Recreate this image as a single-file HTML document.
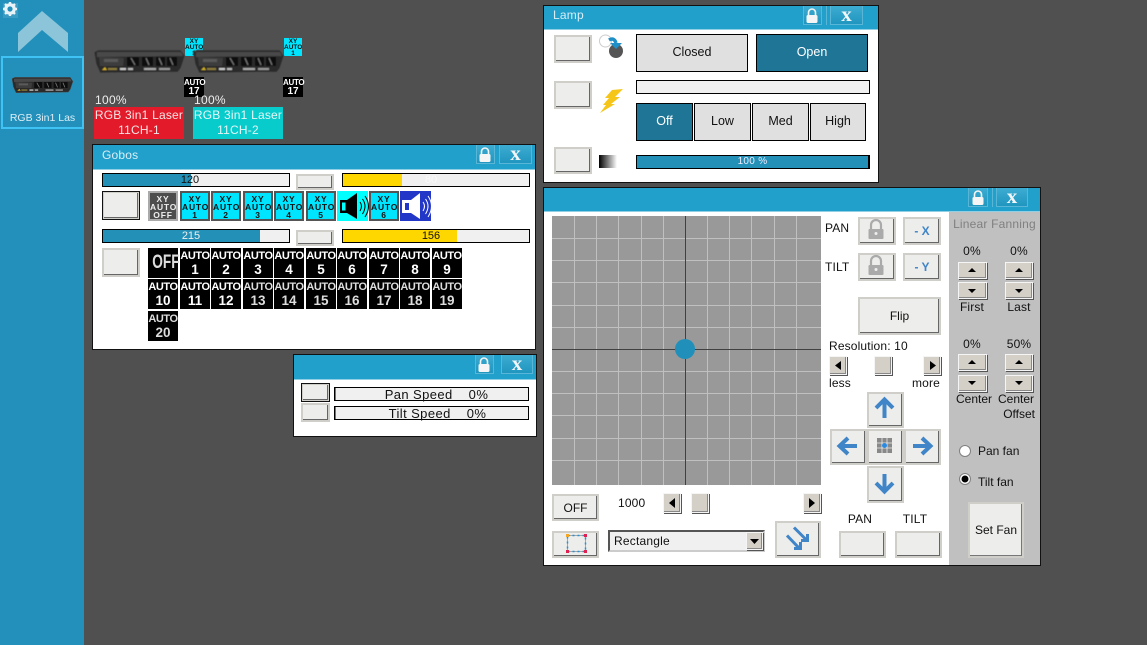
<!DOCTYPE html>
<html><head><meta charset="utf-8"><style>
html,body{margin:0;padding:0;width:1147px;height:645px;overflow:hidden;background:#505050}
div{position:absolute;box-sizing:border-box;white-space:nowrap}
body,div{font-family:"Liberation Sans",sans-serif;font-size:12px;color:#111}
.win{background:#fff;border:1px solid #111}
.tb{background:#22a0cc;border-bottom:1px solid #8fd0e6;color:#d8eef5;padding-left:9px;line-height:20px;font-size:12px;letter-spacing:.2px}
.lk,.cl{background:linear-gradient(#3dacd2,#2096c0);border:1px solid #5ab6d6;height:19px;border-top:0}
.cl{color:#f2f6f8;font:bold 21px/16px "Liberation Serif",serif;text-align:center}
.b{background:#ededeb;border:2px solid #d0cec8;box-shadow:inset -1px -1px 0 #666;text-align:center}
.f{border:1px solid #000;background:#f0f0f0}
.f2{background:#2390b8;height:12px;left:0;top:0}
.c{text-align:center}
.x{background:#00e5ff;border:2px solid #555;width:30px;height:30px;top:191px;font:bold 8.5px/8px "Liberation Sans",sans-serif;letter-spacing:.8px;text-align:center;color:#111;padding-top:2px;white-space:normal}
.g{background:#000;color:#fff;width:30px;height:30px;font:bold 11px/13px "Liberation Sans",sans-serif;letter-spacing:-.4px;text-align:center;padding-top:2px}
.g b{display:block;font-size:13.5px;line-height:14px;letter-spacing:0}
.ar{background:#e0e0e0;border:1px solid #000;font-size:12.5px;line-height:35px;text-align:center;color:#111}
.ac{background:#1f7596;color:#fff}
.sb{background:#d4d0c8;border:1px solid #f5f5f5;box-shadow:1px 1px 0 #555,inset -1px -1px 0 #888}
.t{letter-spacing:.15px}
</style></head><body>
<!-- sidebar -->
<div style="left:0;top:0;width:84px;height:645px;background:#2390bb"></div>
<div style="left:3px;top:3px;width:15px;height:15px;background:#3a9bc3"></div>
<div style="left:1px;top:56px;width:83px;height:73px;border:2px solid #3fc3f5"></div>
<div class="c" style="left:1px;top:112px;width:83px;color:#dceef5;font-size:10.5px">RGB 3in1 Las</div>

<!-- fixtures -->
<div style="left:185px;top:38px;width:18px;height:18px;background:#00e5ff;font:bold 6.5px/6px 'Liberation Sans',sans-serif;text-align:center;white-space:normal;padding-top:1px">XY AUTO 1</div>
<div class="g" style="left:184px;top:77px;width:20px;height:20px;font-size:8px;line-height:9px;padding-top:1px;letter-spacing:-.3px">AUTO<b style="font-size:10px;line-height:10px">17</b></div>
<div style="left:284px;top:38px;width:18px;height:18px;background:#00e5ff;font:bold 6.5px/6px 'Liberation Sans',sans-serif;text-align:center;white-space:normal;padding-top:1px">XY AUTO 1</div>
<div class="g" style="left:283px;top:77px;width:20px;height:20px;font-size:8px;line-height:9px;padding-top:1px;letter-spacing:-.3px">AUTO<b style="font-size:10px;line-height:10px">17</b></div>
<div style="left:95px;top:93px;color:#eee;letter-spacing:.3px">100%</div>
<div style="left:194px;top:93px;color:#eee;letter-spacing:.3px">100%</div>
<div class="c" style="left:94px;top:107px;width:90px;height:32px;background:#e21a2a;color:#f4e6e6;line-height:15px;padding-top:1px;letter-spacing:.2px">RGB 3in1 Laser<br>11CH-1</div>
<div class="c" style="left:193px;top:107px;width:90px;height:32px;background:#08cccc;color:#e6f6f6;line-height:15px;padding-top:1px;letter-spacing:.2px">RGB 3in1 Laser<br>11CH-2</div>

<!-- Gobos window -->
<div class="win" style="left:92px;top:144px;width:444px;height:206px"></div>
<div class="tb" style="left:93px;top:145px;width:442px;height:25px">Gobos</div>
<div class="lk" style="left:476px;top:145px;width:19px"></div>
<div class="cl" style="left:499px;top:145px;width:33px">x</div>

<div class="f" style="left:102px;top:173px;width:188px;height:14px"><div class="f2" style="width:88px"></div><div class="c" style="left:0;top:0;width:174px;font-size:11px">120</div></div>
<div class="b" style="left:296px;top:174px;width:38px;height:16px"></div>
<div class="f" style="left:342px;top:173px;width:188px;height:14px"><div class="f2" style="width:59px;background:#ffd700"></div><div class="c" style="left:0;top:0;width:176px;font-size:11px;color:#f8f8f8">80</div></div>
<div class="b" style="left:102px;top:191px;width:38px;height:29px;outline:1px solid #111;outline-offset:-1px"></div>
<div class="x" style="left:148px;background:#4d4d4d;border-color:#aaa;color:#eee">XY AUTO OFF</div>
<div class="x" style="left:180px">XY AUTO 1</div>
<div class="x" style="left:211px">XY AUTO 2</div>
<div class="x" style="left:243px">XY AUTO 3</div>
<div class="x" style="left:274px">XY AUTO 4</div>
<div class="x" style="left:306px">XY AUTO 5</div>
<div style="left:337px;top:191px;width:31px;height:30px;background:#00ffff"></div>
<div class="x" style="left:369px">XY AUTO 6</div>
<div style="left:400px;top:191px;width:31px;height:30px;background:#2236c8"></div>

<div class="f" style="left:102px;top:229px;width:188px;height:14px"><div class="f2" style="width:157px"></div><div class="c" style="left:0;top:0;width:176px;font-size:11px;color:#f0f0f0">215</div></div>
<div class="b" style="left:296px;top:230px;width:38px;height:16px"></div>
<div class="f" style="left:342px;top:229px;width:188px;height:14px"><div class="f2" style="width:114px;background:#ffd700"></div><div class="c" style="left:0;top:0;width:176px;font-size:11px">156</div></div>
<div class="b" style="left:102px;top:248px;width:38px;height:29px"></div>

<div class="g" style="left:148px;top:248px;padding:0"><div style="left:0;top:4px;width:30px;font:bold 19px/22px 'Liberation Sans',sans-serif;color:#ddd;letter-spacing:0;transform:scaleX(.72);text-align:center">OFF</div></div>
<div class="g" style="left:180px;top:248px">AUTO<b>1</b></div>
<div class="g" style="left:211px;top:248px">AUTO<b>2</b></div>
<div class="g" style="left:243px;top:248px">AUTO<b>3</b></div>
<div class="g" style="left:274px;top:248px">AUTO<b>4</b></div>
<div class="g" style="left:306px;top:248px">AUTO<b>5</b></div>
<div class="g" style="left:337px;top:248px">AUTO<b>6</b></div>
<div class="g" style="left:369px;top:248px">AUTO<b>7</b></div>
<div class="g" style="left:400px;top:248px">AUTO<b>8</b></div>
<div class="g" style="left:432px;top:248px">AUTO<b>9</b></div>
<div class="g" style="left:148px;top:279px">AUTO<b>10</b></div>
<div class="g" style="left:180px;top:279px">AUTO<b>11</b></div>
<div class="g" style="left:211px;top:279px">AUTO<b>12</b></div>
<div class="g" style="left:243px;top:279px;color:#ddd">AUTO<b>13</b></div>
<div class="g" style="left:274px;top:279px;color:#ddd">AUTO<b>14</b></div>
<div class="g" style="left:306px;top:279px;color:#ddd">AUTO<b>15</b></div>
<div class="g" style="left:337px;top:279px;color:#ddd">AUTO<b>16</b></div>
<div class="g" style="left:369px;top:279px;color:#ddd">AUTO<b>17</b></div>
<div class="g" style="left:400px;top:279px;color:#ddd">AUTO<b>18</b></div>
<div class="g" style="left:432px;top:279px;color:#ddd">AUTO<b>19</b></div>
<div class="g" style="left:148px;top:311px;color:#ddd">AUTO<b>20</b></div>

<!-- speed window -->
<div class="win" style="left:293px;top:354px;width:244px;height:83px"></div>
<div class="tb" style="left:294px;top:355px;width:242px;height:25px"></div>
<div class="lk" style="left:475px;top:355px;width:19px"></div>
<div class="cl" style="left:501px;top:355px;width:32px">x</div>
<div class="b" style="left:301px;top:383px;width:29px;height:19px;outline:1px solid #111;outline-offset:-1px"></div>
<div class="b" style="left:301px;top:403px;width:29px;height:19px"></div>
<div class="f" style="left:334px;top:387px;width:195px;height:14px"><div style="left:0;top:0;width:1px;height:12px;background:#2390b8"></div></div>
<div class="c" style="left:339px;top:387px;width:195px;font-size:13px;letter-spacing:.4px">Pan Speed &nbsp;&nbsp;&nbsp;0%</div>
<div class="f" style="left:334px;top:406px;width:195px;height:14px"><div style="left:0;top:0;width:1px;height:12px;background:#2390b8"></div></div>
<div class="c" style="left:340px;top:406px;width:195px;font-size:13px;letter-spacing:.4px">Tilt Speed &nbsp;&nbsp;&nbsp;0%</div>

<!-- Lamp window -->
<div class="win" style="left:543px;top:5px;width:336px;height:178px"></div>
<div class="tb" style="left:544px;top:6px;width:334px;height:24px;line-height:19px">Lamp</div>
<div class="lk" style="left:803px;top:6px;width:19px"></div>
<div style="left:826px;top:6px;width:1px;height:19px;background:#5ab6d6"></div>
<div class="cl" style="left:830px;top:6px;width:33px">x</div>
<div class="b" style="left:554px;top:35px;width:38px;height:28px"></div>
<div class="b" style="left:554px;top:81px;width:38px;height:28px"></div>
<div class="b" style="left:554px;top:147px;width:38px;height:27px"></div>
<div class="ar" style="left:636px;top:34px;width:112px;height:38px">Closed</div>
<div class="ar ac" style="left:756px;top:34px;width:112px;height:38px">Open</div>
<div class="f" style="left:636px;top:80px;width:234px;height:14px"></div>
<div class="ar ac" style="left:636px;top:103px;width:57px;height:38px">Off</div>
<div class="ar" style="left:694px;top:103px;width:57px;height:38px">Low</div>
<div class="ar" style="left:752px;top:103px;width:57px;height:38px">Med</div>
<div class="ar" style="left:810px;top:103px;width:56px;height:38px">High</div>
<div style="left:599px;top:155px;width:18px;height:13px;background:linear-gradient(90deg,#000,#fff)"></div>
<div class="f" style="left:636px;top:155px;width:234px;height:14px;background:#2390b8;border-right:2px solid #000;color:#eef;text-align:center;font-size:10px;line-height:12px;letter-spacing:.3px">100 %</div>

<!-- Main window -->
<div class="win" style="left:543px;top:187px;width:498px;height:379px"></div>
<div class="tb" style="left:544px;top:188px;width:496px;height:24px"></div>
<div class="lk" style="left:968px;top:188px;width:20px"></div>
<div style="left:992px;top:188px;width:1px;height:19px;background:#5ab6d6"></div>
<div class="cl" style="left:996px;top:188px;width:32px">x</div>
<div style="left:949px;top:212px;width:91px;height:353px;background:#c0c0c0"></div>

<div class="t" style="left:825px;top:221px">PAN</div>
<div class="t" style="left:825px;top:260px">TILT</div>
<div class="b" style="left:858px;top:217px;width:38px;height:28px"></div>
<div class="b" style="left:903px;top:217px;width:38px;height:28px;color:#3f85c8;font-weight:bold;line-height:24px">- X</div>
<div class="b" style="left:858px;top:253px;width:38px;height:28px"></div>
<div class="b" style="left:903px;top:253px;width:38px;height:28px;color:#3f85c8;font-weight:bold;line-height:24px">- Y</div>
<div class="b" style="left:858px;top:297px;width:83px;height:38px;line-height:34px">Flip</div>
<div class="t" style="left:829px;top:339px">Resolution: 10</div>
<div class="sb" style="left:829px;top:356px;width:18px;height:19px"></div>
<div class="sb" style="left:874px;top:356px;width:18px;height:19px"></div>
<div class="sb" style="left:923px;top:356px;width:18px;height:19px"></div>
<div class="t" style="left:829px;top:376px">less</div>
<div class="t" style="left:912px;top:376px">more</div>
<div class="b" style="left:867px;top:392px;width:37px;height:36px"></div>
<div class="b" style="left:830px;top:429px;width:37px;height:36px"></div>
<div class="b" style="left:867px;top:429px;width:37px;height:36px"></div>
<div class="b" style="left:904px;top:429px;width:37px;height:36px"></div>
<div class="b" style="left:867px;top:466px;width:37px;height:37px"></div>
<div class="c t" style="left:830px;top:512px;width:60px">PAN</div>
<div class="c t" style="left:885px;top:512px;width:60px">TILT</div>
<div class="b" style="left:839px;top:531px;width:47px;height:27px"></div>
<div class="b" style="left:895px;top:531px;width:47px;height:27px"></div>

<div class="b" style="left:552px;top:494px;width:47px;height:27px;line-height:24px">OFF</div>
<div class="t" style="left:618px;top:496px">1000</div>
<div class="sb" style="left:663px;top:493px;width:18px;height:20px"></div>
<div class="sb" style="left:691px;top:493px;width:18px;height:20px"></div>
<div class="sb" style="left:803px;top:493px;width:18px;height:20px"></div>
<div class="b" style="left:552px;top:531px;width:47px;height:27px"></div>
<div style="left:608px;top:530px;width:157px;height:22px;background:#f0f0f0;border:2px solid #555;border-right-color:#ccc;border-bottom-color:#ccc;padding-left:4px;line-height:18px;letter-spacing:.2px">Rectangle</div>
<div class="sb" style="left:746px;top:532px;width:17px;height:18px"></div>
<div class="b" style="left:775px;top:521px;width:46px;height:37px"></div>

<!-- fanning -->
<div class="c" style="left:949px;top:217px;width:91px;color:#808080;letter-spacing:.2px">Linear Fanning</div>
<div class="c t" style="left:952px;top:244px;width:40px">0%</div>
<div class="c t" style="left:999px;top:244px;width:40px">0%</div>
<div class="sb" style="left:958px;top:262px;width:29px;height:17px"></div>
<div class="sb" style="left:958px;top:282px;width:29px;height:17px"></div>
<div class="sb" style="left:1005px;top:262px;width:28px;height:17px"></div>
<div class="sb" style="left:1005px;top:282px;width:28px;height:17px"></div>
<div class="c t" style="left:952px;top:300px;width:40px">First</div>
<div class="c t" style="left:999px;top:300px;width:40px">Last</div>
<div class="c t" style="left:952px;top:337px;width:40px">0%</div>
<div class="c t" style="left:999px;top:337px;width:40px">50%</div>
<div class="sb" style="left:958px;top:354px;width:29px;height:17px"></div>
<div class="sb" style="left:958px;top:375px;width:29px;height:17px"></div>
<div class="sb" style="left:1005px;top:354px;width:28px;height:17px"></div>
<div class="sb" style="left:1005px;top:375px;width:28px;height:17px"></div>
<div class="c" style="left:950px;top:392px;width:48px">Center</div>
<div class="c" style="left:993px;top:392px;width:46px">Center</div>
<div style="left:1002px;top:407px;width:33px;text-align:right">Offset</div>
<div style="left:978px;top:444px">Pan fan</div>
<div style="left:978px;top:475px">Tilt fan</div>
<div class="b" style="left:968px;top:502px;width:56px;height:56px;line-height:52px;box-shadow:inset -1px -1px 0 #777">Set Fan</div>

<!-- all icons, page coordinates -->
<svg width="1147" height="645" viewBox="0 0 1147 645" style="position:absolute;left:0;top:0">
<defs>
<filter id="bl"><feGaussianBlur stdDeviation=".45"/></filter>
<g id="fx" filter="url(#bl)">
<path d="M0 4L4 2L87 2L91 8L87 20L84 24L6 25L2 16Z" fill="#2a2a2a" stroke="#555" stroke-width=".6"/>
<path d="M3 4L87 4L89 8L3 9Z" fill="#4a4a4a"/>
<path d="M5 9L30 10L29 18L6 18Z" fill="#3c3c3c"/>
<rect x="10" y="11" width="14" height="3" fill="#5a5a5a"/>
<path d="M33 9h12v9h-12zM48 9h11v9h-11zM62 9h9v9h-9zM73 9h10v9h-10z" fill="#111"/>
<path d="M37 10l4 7M52 10l3 7M65 10l3 7M76 10l3 7" stroke="#777" stroke-width="1.200"/>
<path d="M8 22l3-3 2 3z" fill="#d4b020"/>
<rect x="14" y="20" width="9" height="2" fill="#8c7d3a"/>
<rect x="26" y="20" width="6" height="2" fill="#ccc"/>
<rect x="34" y="20" width="5" height="2" fill="#bbb"/>
<rect x="50" y="20" width="12" height="2" fill="#aaa"/>
<rect x="65" y="20" width="11" height="2" fill="#999"/>
</g>
<g id="wl"><rect x="-5.500" y="-1" width="11" height="8" rx="1.500" fill="#f5f5f5"/><path d="M-3.500-1v-2.500a3.500 3.500 0 0 1 7 0v2.500" fill="none" stroke="#f5f5f5" stroke-width="1.600"/></g>
<g id="gl"><rect x="-7.500" y="-1" width="15" height="10" rx="1" fill="#aaa"/><path d="M-5-1v-4a5 5 0 0 1 10 0v4" fill="none" stroke="#aaa" stroke-width="2.200"/><circle cy="3.500" r="1.500" fill="#eee"/></g>
<path id="tu" d="M-4 2L4 2L0-2Z" fill="#000"/>
<path id="td" d="M-4-2L4-2L0 2Z" fill="#000"/>
</defs>
<!-- gear -->
<g transform="translate(10 9)"><circle r="4.500" fill="none" stroke="#e8f3f8" stroke-width="2.600"/><path d="M0-7V7M-7 0H7M-5-5L5 5M-5 5L5-5" stroke="#e8f3f8" stroke-width="2.400"/><circle r="2.600" fill="#2390bb"/></g>
<!-- chevron -->
<path d="M42 11L68 33V52L42 30L18 52V33Z" fill="#8cc5da"/>
<use href="#fx" transform="translate(12 76) scale(.67)"/>
<use href="#fx" transform="translate(94 48)"/>
<use href="#fx" transform="translate(193 48)"/>
<!-- locks -->
<use href="#wl" transform="translate(485 155)"/>
<use href="#wl" transform="translate(484 365)"/>
<use href="#wl" transform="translate(812 16)"/>
<use href="#wl" transform="translate(978 198)"/>
<use href="#gl" transform="translate(876 230)"/>
<use href="#gl" transform="translate(876 266)"/>
<!-- speakers -->
<g fill="#000"><rect x="340" y="200" width="7" height="13"/><path d="M347 200L357 193V219L347 213Z"/></g>
<rect x="342" y="202.500" width="3.500" height="8" fill="#00ffff"/>
<g fill="none" stroke="#000" stroke-width="1"><path d="M360 202q3 4 0 9M362.500 199q5 7 0 15M365 196q7 10 0 21"/></g>
<g fill="#fff"><rect x="402" y="200" width="9" height="13"/><path d="M411 200L420 193V219L411 213Z"/></g>
<rect x="405" y="203" width="4" height="7" fill="#2236c8"/>
<g fill="none" stroke="#fff" stroke-width="1"><path d="M423 202q3 4 0 9M425.500 199q5 7 0 15M428 196q7 10 0 21"/></g>
<!-- shutter -->
<circle cx="605.500" cy="41" r="6" fill="#fff" stroke="#ccc"/>
<circle cx="616" cy="51" r="7" fill="#555"/>
<path d="M609 40Q614 37 616 43" fill="none" stroke="#1f8fc8" stroke-width="3.500"/>
<path d="M610 43H622L616 49Z" fill="#1f8fc8"/>
<!-- lightning -->
<path d="M612 90L623 89L615 97L620 97L611 104L615 104L600 113L606 105L603 105L609 98L605 98Z" fill="#f5c518"/>
<!-- grid -->
<rect x="552" y="216" width="269" height="269" fill="#999"/>
<path d="M574.500 216V485M596.500 216V485M618.500 216V485M641.500 216V485M663.500 216V485M707.500 216V485M729.500 216V485M751.500 216V485M774.500 216V485M796.500 216V485M552 238.500H821M552 260.500H821M552 282.500H821M552 305.500H821M552 327.500H821M552 371.500H821M552 393.500H821M552 415.500H821M552 438.500H821M552 460.500H821" stroke="#c0c0c0" stroke-width="1" fill="none"/>
<path d="M685.500 216V485M552 349.500H821" stroke="#404040" stroke-width="1"/>
<circle cx="685" cy="349" r="10" fill="#2090ba"/>
<!-- scroll triangles -->
<path d="M841 361V370L835 365.500Z"/>
<path d="M930 361V370L936 365.500Z"/>
<path d="M675 498V508L669 503Z"/>
<path d="M809 498V508L815 503Z"/>
<path d="M750 539H759L754.500 544Z"/>
<use href="#tu" transform="translate(972 270)"/><use href="#td" transform="translate(972 291)"/>
<use href="#tu" transform="translate(1019 270)"/><use href="#td" transform="translate(1019 291)"/>
<use href="#tu" transform="translate(972 362)"/><use href="#td" transform="translate(972 383)"/>
<use href="#tu" transform="translate(1019 362)"/><use href="#td" transform="translate(1019 383)"/>
<!-- pad arrows -->
<g fill="none" stroke="#3f85c8" stroke-width="4">
<path d="M884.500 418V400M876 408L884.500 399.500L893 408"/>
<path d="M857 446H840M848 438L839.500 446L848 454"/>
<path d="M913 446H930M922 438L930.500 446L922 454"/>
<path d="M884.500 474V491M876 483L884.500 491.500L893 483"/>
<path d="M794 527.500L806.500 540M807.500 534V540.500H801" stroke-width="3"/>
<path d="M787 535.500L799 548M800.500 542V548.500H794" stroke-width="3"/>
</g>
<!-- center icon -->
<path d="M877 438h15v15h-15z" fill="#888"/>
<path d="M882 438v15M887 438v15M877 443h15M877 448h15" stroke="#ededeb" stroke-width=".8"/>
<circle cx="884.500" cy="445.500" r="2.500" fill="#2a8ae0"/>
<!-- rect icon -->
<rect x="567.500" y="535.500" width="18" height="16" fill="none" stroke="#777" stroke-width=".6"/>
<rect x="567.500" y="535.500" width="18" height="16" fill="none" stroke="#2a90d0" stroke-width="1.500" stroke-dasharray="2 3"/>
<rect x="566" y="534" width="3" height="3" fill="#f5a623"/>
<rect x="584" y="534" width="3" height="3" fill="#e02050"/>
<rect x="566" y="550" width="3" height="3" fill="#e02050"/>
<rect x="584" y="550" width="3" height="3" fill="#e02050"/>
<!-- radios -->
<circle cx="965" cy="451" r="5.500" fill="#fff" stroke="#808080"/>
<circle cx="965" cy="479" r="5.500" fill="#fff" stroke="#808080"/>
<circle cx="965" cy="479" r="3.500" fill="#000"/>
</svg>
</body></html>
